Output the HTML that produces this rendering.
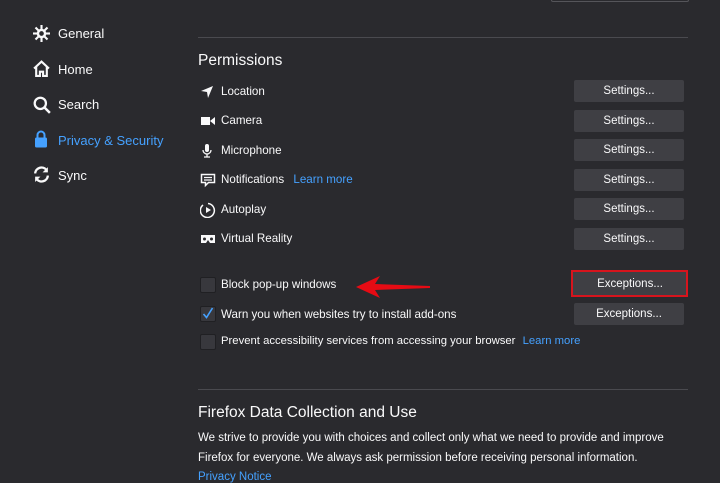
<!DOCTYPE html>
<html><head><style>
body{margin:0;width:720px;height:480px;background:#2a2a2e;font-family:"Liberation Sans",sans-serif;color:#f9f9fa;position:relative;overflow:hidden;font-size:12px}
.a{position:absolute;white-space:nowrap}
.nav{font-size:13px;left:58px}
.btn{position:absolute;left:574px;width:110px;height:22px;background:#3f3f44;border-radius:2px;text-align:center;line-height:22px;font-size:11.5px}
.lbl{left:221px;font-size:11.6px}
.ic{position:absolute;left:200px}
.cb{position:absolute;left:200px;width:14px;height:14px;background:#38383d;border:1px solid #202023;border-radius:2px}
.blue{color:#45a1ff}
.hr{position:absolute;left:198px;width:490px;height:1px;background:#4a4a4f}
</style></head><body>
<div style="position:absolute;left:551px;top:-2px;width:136px;height:3px;border:1px solid #55555a;border-top:none;border-radius:2px"></div>
<div class="hr" style="top:37px"></div>
<div class="hr" style="top:389px"></div>

<svg class="a" style="left:33px;top:25px" width="17" height="17" viewBox="0 0 16 16"><g fill="#f9f9fa"><circle cx="8" cy="8" r="4.5"/><rect x="7" y="0" width="2" height="16"/><rect x="0" y="7" width="16" height="2"/><rect x="7" y="0" width="2" height="16" transform="rotate(45 8 8)"/><rect x="7" y="0" width="2" height="16" transform="rotate(-45 8 8)"/></g><circle cx="8" cy="8" r="2.2" fill="#2a2a2e"/></svg>
<div class="a nav" style="top:26px">General</div>
<svg class="a" style="left:33px;top:60px" width="17" height="17" viewBox="0 0 16 16"><path d="M1 8L8 1.5 15 8M3 6.5V15h3.5v-4h3v4H13V6.5" fill="none" stroke="#f9f9fa" stroke-width="2"/></svg>
<div class="a nav" style="top:62px">Home</div>
<svg class="a" style="left:33px;top:96px" width="18" height="18" viewBox="0 0 16 16"><circle cx="6.5" cy="6.5" r="5" fill="none" stroke="#f9f9fa" stroke-width="2"/><path d="M10 10l5 5" stroke="#f9f9fa" stroke-width="2.2"/></svg>
<div class="a nav" style="top:97px">Search</div>
<svg class="a" style="left:34px;top:130px" width="14" height="18" viewBox="0 0 14 18"><path d="M3.5 8V5a3.5 3.5 0 017 0v3" fill="none" stroke="#45a1ff" stroke-width="2"/><rect x="1" y="7.5" width="12" height="10" rx="1.5" fill="#45a1ff"/></svg>
<div class="a nav blue" style="top:133px">Privacy &amp; Security</div>
<svg class="a" style="left:33px;top:166px" width="17" height="17" viewBox="0 0 16 16"><path d="M2 7a6 6 0 0110.5-3.5M14 9a6 6 0 01-10.5 3.5" fill="none" stroke="#f9f9fa" stroke-width="2.2"/><path d="M14 1v5h-5zM2 15v-5h5z" fill="#f9f9fa"/></svg>
<div class="a nav" style="top:168px">Sync</div>

<div class="a" style="left:198px;top:52px;font-size:15.5px">Permissions</div>

<svg class="ic" style="top:85px" width="14" height="14" viewBox="0 0 14 14"><path d="M1 6L13 1 8 13 7 7z" fill="#f9f9fa"/></svg>
<div class="a lbl" style="top:85px">Location</div>
<svg class="ic" style="top:115px" width="16" height="12" viewBox="0 0 16 12"><rect x="1" y="2" width="9" height="8" fill="#f9f9fa"/><path d="M10 6l5-4v8z" fill="#f9f9fa"/></svg>
<div class="a lbl" style="top:114px">Camera</div>
<svg class="ic" style="top:143px" width="14" height="15" viewBox="0 0 14 15"><rect x="5" y="1" width="4" height="8" rx="2" fill="#f9f9fa"/><path d="M3 7a4 4 0 008 0M7 11v3M4 14h6" fill="none" stroke="#f9f9fa" stroke-width="1.3"/></svg>
<div class="a lbl" style="top:144px">Microphone</div>
<svg class="ic" style="top:173px" width="16" height="15" viewBox="0 0 16 15"><path d="M1.5 1.5h13v8h-6l-3 3v-3h-4z" fill="none" stroke="#f9f9fa" stroke-width="1.5"/><path d="M4 4.5h8M4 7h8" stroke="#f9f9fa" stroke-width="1.3"/></svg>
<div class="a lbl" style="top:173px">Notifications <span class="blue" style="margin-left:6px">Learn more</span></div>
<svg class="ic" style="top:202px" width="16" height="16" viewBox="0 0 16 16"><path d="M3 3a7 7 0 105 -1.5" fill="none" stroke="#f9f9fa" stroke-width="1.5"/><path d="M6 5l5 3-5 3z" fill="#f9f9fa"/></svg>
<div class="a lbl" style="top:203px">Autoplay</div>
<svg class="ic" style="top:234px" width="16" height="10" viewBox="0 0 16 10"><path d="M1 1h14v8h-5l-2-3-2 3H1z" fill="#f9f9fa"/><circle cx="4.5" cy="5" r="1.5" fill="#2a2a2e"/><circle cx="11.5" cy="5" r="1.5" fill="#2a2a2e"/></svg>
<div class="a lbl" style="top:232px">Virtual Reality</div>

<div class="btn" style="top:80px">Settings...</div>
<div class="btn" style="top:110px">Settings...</div>
<div class="btn" style="top:139px">Settings...</div>
<div class="btn" style="top:169px">Settings...</div>
<div class="btn" style="top:198px">Settings...</div>
<div class="btn" style="top:228px">Settings...</div>

<div class="cb" style="top:277px"></div>
<div class="a lbl" style="top:278px">Block pop-up windows</div>
<svg class="a" style="left:356px;top:275px" width="74" height="24" viewBox="0 0 74 24"><path d="M0 12L24 1 19 9 74 11 74 13 19 15 24 23z" fill="#e60b14"/></svg>
<div class="cb" style="top:306px"></div>
<svg class="a" style="left:202px;top:307px" width="12" height="13" viewBox="0 0 12 13"><path d="M1.5 7l3 3.5L10.5 1" fill="none" stroke="#45a1ff" stroke-width="1.6"/></svg>
<div class="a lbl" style="top:308px">Warn you when websites try to install add-ons</div>
<div class="cb" style="top:334px"></div>
<div class="a lbl" style="top:335px;font-size:11.3px">Prevent accessibility services from accessing your browser <span class="blue" style="margin-left:4px">Learn more</span></div>

<div style="position:absolute;left:571px;top:270px;width:113px;height:23px;border:2px solid #d7141d;background:#3f3f44"></div>
<div class="btn" style="top:273px;left:575px">Exceptions...</div>
<div class="btn" style="top:303px">Exceptions...</div>

<div class="a" style="left:198px;top:404px;font-size:15.5px">Firefox Data Collection and Use</div>
<div class="a" style="left:198px;top:432px;font-size:11.5px">We strive to provide you with choices and collect only what we need to provide and improve</div>
<div class="a" style="left:198px;top:452px;font-size:11.5px">Firefox for everyone. We always ask permission before receiving personal information.</div>
<div class="a blue" style="left:198px;top:471px;font-size:11.5px">Privacy Notice</div>
</body></html>
